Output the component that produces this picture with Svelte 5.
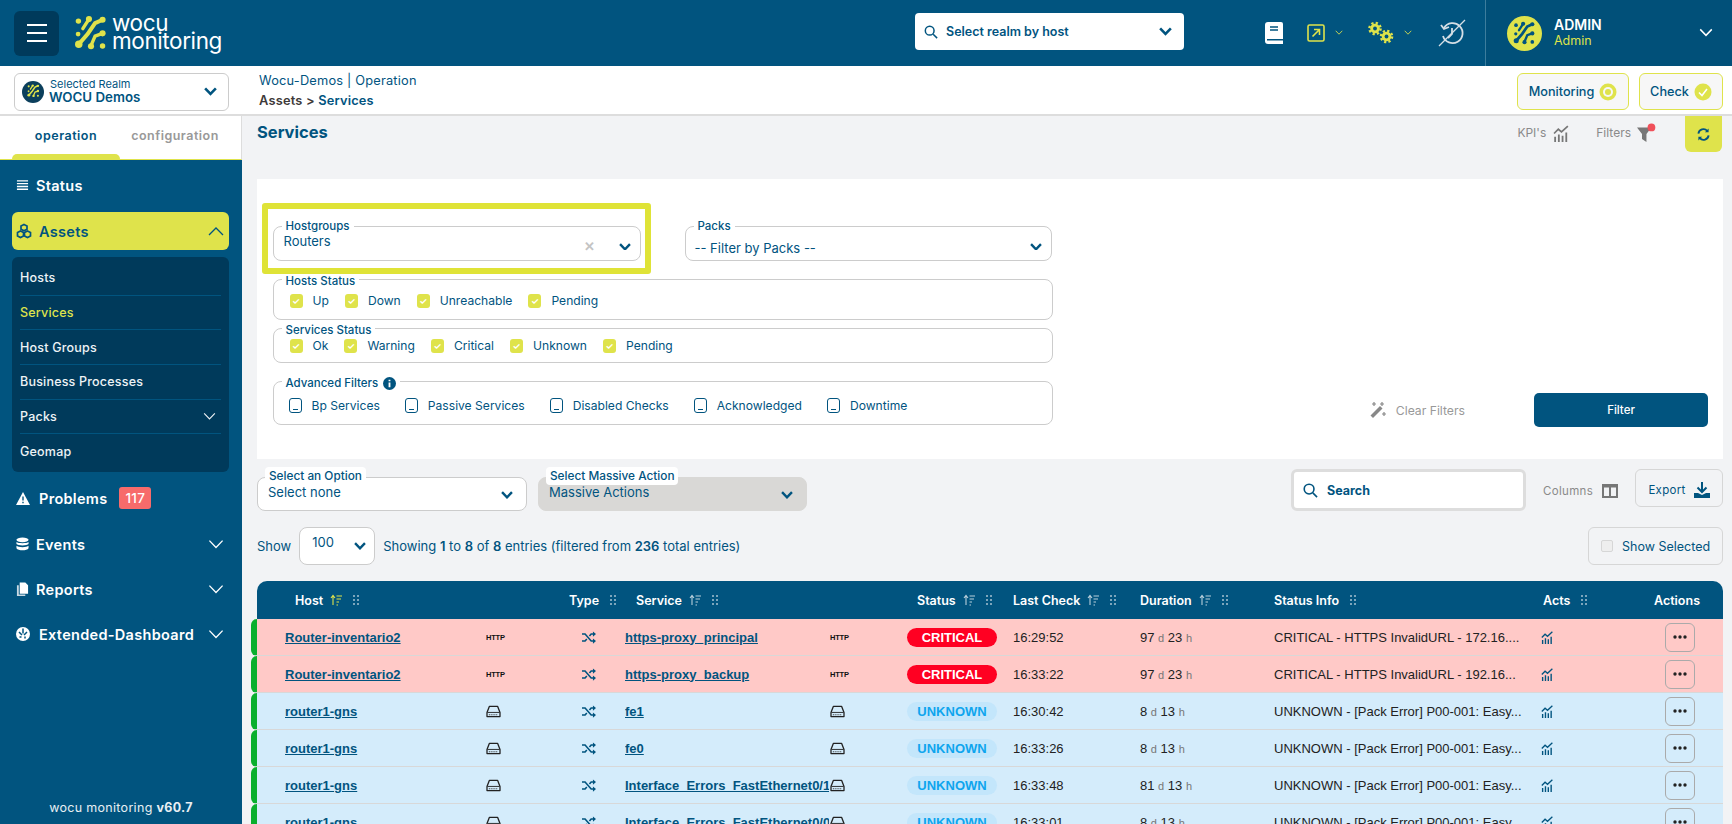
<script lang="ts">
  const hostsStatus = ['Up', 'Down', 'Unreachable', 'Pending']
  const servicesStatus = ['Ok', 'Warning', 'Critical', 'Unknown', 'Pending']
  const advanced = ['Bp Services', 'Passive Services', 'Disabled Checks', 'Acknowledged', 'Downtime']
  const subMenu = ['Hosts', 'Services', 'Host Groups', 'Business Processes', 'Packs', 'Geomap']

  const pack = 'UNKNOWN - [Pack Error] P00-001: Easy...'
  const rows = [
    { host: 'Router-inventario2', service: 'https-proxy_principal', icon: 'http', status: 'CRITICAL', last: '16:29:52', d: 97, h: 23, info: 'CRITICAL - HTTPS InvalidURL - 172.16....' },
    { host: 'Router-inventario2', service: 'https-proxy_backup', icon: 'http', status: 'CRITICAL', last: '16:33:22', d: 97, h: 23, info: 'CRITICAL - HTTPS InvalidURL - 192.16...' },
    { host: 'router1-gns', service: 'fe1', icon: 'router', status: 'UNKNOWN', last: '16:30:42', d: 8, h: 13, info: pack },
    { host: 'router1-gns', service: 'fe0', icon: 'router', status: 'UNKNOWN', last: '16:33:26', d: 8, h: 13, info: pack },
    { host: 'router1-gns', service: 'Interface_Errors_FastEthernet0/1', icon: 'router', status: 'UNKNOWN', last: '16:33:48', d: 81, h: 13, info: pack },
    { host: 'router1-gns', service: 'Interface_Errors_FastEthernet0/0', icon: 'router', status: 'UNKNOWN', last: '16:33:01', d: 8, h: 13, info: pack },
  ]
</script>

{#snippet chevron(size = 12, width = 2.4)}
  <svg class="chev" viewBox="0 0 12 8" width={size} height={size * 0.66}>
    <path d="M1 1.2 6 6.4 11 1.2" fill="none" stroke="currentColor" stroke-width={width} />
  </svg>
{/snippet}

{#snippet mark(color: string, w: number)}
  <svg viewBox="10 12 100 108" width={w} height={w * 1.08}>
    <g fill="none" stroke={color} stroke-linecap="round">
      <path d="M54 24 36 52" stroke-width="10" />
      <path d="M94 26 72 36 50 68 24 98" stroke-width="12" />
      <path d="M94 66 72 74 60 102" stroke-width="10" />
    </g>
    <g fill={color}>
      <circle cx="23" cy="30" r="8" />
      <circle cx="54" cy="24" r="9" />
      <circle cx="94" cy="26" r="9" />
      <circle cx="22" cy="68" r="7" />
      <circle cx="24" cy="98" r="11" />
      <circle cx="94" cy="66" r="9" />
      <circle cx="60" cy="104" r="9" />
      <circle cx="94" cy="103" r="8" />
    </g>
  </svg>
{/snippet}

{#snippet sortIcon(active = false)}
  <svg class="sort" class:active viewBox="0 0 12 12" width="12" height="12">
    <path d="M3 11V2M1 4l2-2.500L5 4" fill="none" stroke="currentColor" stroke-width="1.100" />
    <path d="M6.500 2H12M6.500 5H11M6.500 8H9M6.500 11H8" stroke="currentColor" stroke-width="1.200" />
  </svg>
{/snippet}

{#snippet dragIcon()}
  <svg class="drag" viewBox="0 0 8 12" width="8" height="12">
    <g fill="currentColor">
      <rect x="1" y="1" width="2" height="2" /><rect x="5" y="1" width="2" height="2" />
      <rect x="1" y="5" width="2" height="2" /><rect x="5" y="5" width="2" height="2" />
      <rect x="1" y="9" width="2" height="2" /><rect x="5" y="9" width="2" height="2" />
    </g>
  </svg>
{/snippet}

{#snippet kpiIcon(w: number, color: string)}
  <svg viewBox="0 0 16 16" width={w} height={w}>
    <path d="M1 8 5 4 8 6.500 14 1" fill="none" stroke={color} stroke-width="1.600" />
    <path d="M2 11v5M5.500 9v7M9 10v6M12.500 7v9" stroke={color} stroke-width="1.700" />
  </svg>
{/snippet}

{#snippet gear(cx: number, cy: number)}
  <circle cx={cx} cy={cy} r="4.800" fill="#dfe34b" />
  <circle cx={cx} cy={cy} r="5.600" fill="none" stroke="#dfe34b" stroke-width="2.400" stroke-dasharray="2.200 2.200" />
  <circle cx={cx} cy={cy} r="1.900" fill="#01547f" />
{/snippet}

{#snippet rowIcon(kind: string)}
  {#if kind === 'http'}
    <span class="http">HTTP</span>
  {:else}
    <svg viewBox="0 0 16 14" width="15" height="13">
      <path d="M3.500 1.500h9L15 8v4.500H1V8z" fill="none" stroke="#222" stroke-width="1.400" stroke-linejoin="round" />
      <path d="M1.500 8h13" stroke="#222" stroke-width="1" />
      <path d="M3 10.500h10" stroke="#222" stroke-width="1.300" stroke-dasharray="1 1" />
    </svg>
  {/if}
{/snippet}

<div class="page">
  <header class="topbar">
    <button class="burger" aria-label="menu">
      <span></span><span></span><span></span>
    </button>
    <div class="logo">
      {@render mark('#dfe34b', 34)}
      <div class="logo-text">wocu<br />monitoring</div>
    </div>

    <div class="realm-search">
      <svg viewBox="0 0 16 16" width="14" height="14">
        <circle cx="6.500" cy="6.500" r="5" fill="none" stroke="#01547f" stroke-width="1.700" />
        <path d="M10.500 10.500 15 15" stroke="#01547f" stroke-width="1.700" />
      </svg>
      <span>Select realm by host</span>
      {@render chevron(13)}
    </div>

    <div class="tools">
      <svg class="t-book" viewBox="0 0 18 22" width="18" height="22">
        <path d="M3 0h13a2 2 0 0 1 2 2v20H3a3 3 0 0 1-3-3V3a3 3 0 0 1 3-3z" fill="#fff" />
        <path d="M5 5h8M5 8h8" stroke="#01547f" stroke-width="1.500" />
        <path d="M2 17h16v1.500H2z" fill="#01547f" />
      </svg>
      <svg class="t-ext" viewBox="0 0 18 18" width="18" height="18">
        <rect x="1" y="1" width="16" height="16" rx="1.500" fill="none" stroke="#dfe34b" stroke-width="1.600" />
        <path d="M5.500 12.500 12 6M7 5.500h5.500V11" fill="none" stroke="#dfe34b" stroke-width="1.600" />
      </svg>
      <span class="t-down">{@render chevron(8, 1.300)}</span>
      <svg class="t-gears" viewBox="0 0 26 24" width="26" height="24">
        {@render gear(7, 7.500)}
        {@render gear(18.500, 15.500)}
      </svg>
      <span class="t-down2">{@render chevron(8, 1.300)}</span>
      <svg class="t-off" viewBox="0 0 28 28" width="28" height="28">
        <path d="M6 9a10 10 0 1 1-1 8" fill="none" stroke="#d5dfe6" stroke-width="1.800" />
        <path d="M3 6l3 4 5-2M14 9v6l-4 4" fill="none" stroke="#d5dfe6" stroke-width="1.800" />
        <path d="M1 27 27 1" stroke="#d5dfe6" stroke-width="1.300" />
      </svg>
    </div>

    <div class="user">
      <span class="avatar">{@render mark('#01547f', 23)}</span>
      <div class="user-text">
        <strong>ADMIN</strong>
        <small>Admin</small>
      </div>
      {@render chevron(14, 1.300)}
    </div>
  </header>

  <div class="subbar">
    <div class="realm-box">
      <span class="realm-dot">{@render mark('#dfe34b', 13)}</span>
      <div class="realm-text">
        <small>Selected Realm</small>
        <strong>WOCU Demos</strong>
      </div>
      {@render chevron(13)}
    </div>
    <div class="crumbs">
      <div>Wocu-Demos | Operation</div>
      <div class="crumb-2"><b>Assets &gt;</b> <span>Services</span></div>
    </div>
    <div class="modes">
      <button class="mode mode-mon">
        Monitoring
        <svg viewBox="0 0 18 18" width="18" height="18">
          <circle cx="9" cy="9" r="8.500" fill="#dfe34b" />
          <circle cx="9" cy="9" r="5" fill="#f7f7f7" />
          <circle cx="9" cy="9" r="3" fill="#dfe34b" />
        </svg>
      </button>
      <button class="mode">
        Check
        <svg viewBox="0 0 18 18" width="18" height="18">
          <circle cx="9" cy="9" r="8.500" fill="#dfe34b" />
          <path d="M5 9.500 8 12.500 13 6" fill="none" stroke="#fff" stroke-width="1.600" />
        </svg>
      </button>
    </div>
  </div>

  <div class="body">
    <aside class="side">
      <div class="tabs">
        <div class="tab on">operation</div>
        <div class="tab">configuration</div>
      </div>
      <nav class="menu">
        <div class="item">
          <svg viewBox="0 0 14 14" width="13" height="13">
            <path d="M1 2h12M1 5h12M1 8h12M1 11h12" stroke="#fff" stroke-width="1.500" />
          </svg>
          <span>Status</span>
        </div>
        <div class="item current">
          <svg viewBox="0 0 16 16" width="16" height="16">
            <g fill="none" stroke="#01547f" stroke-width="1.700">
              <path d="M8 1.500 11 3v3.200L8 7.800 5 6.200V3z" />
              <path d="M4.500 8 7.500 9.500v3.500l-3 1.500-3-1.500V9.500z" />
              <path d="M11.500 8l3 1.500v3.500l-3 1.500-3-1.500V9.500z" />
            </g>
          </svg>
          <span>Assets</span>
          <svg class="end" viewBox="0 0 16 9" width="16" height="9">
            <path d="M1 8 8 1l7 7" fill="none" stroke="#01547f" stroke-width="1.300" />
          </svg>
        </div>
        <div class="sub">
          {#each subMenu as name}
            <div class="sub-row" class:sel={name === 'Services'}>
              {name}
              {#if name === 'Packs'}
                {@render chevron(13, 1)}
              {/if}
            </div>
          {/each}
        </div>
        <div class="item problems">
          <svg viewBox="0 0 14 13" width="14" height="13">
            <path d="M7 0 14 13H0z" fill="#fff" />
            <path d="M7 4.500v4M7 9.800v1.500" stroke="#01547f" stroke-width="1.400" />
          </svg>
          <span class="gap-wide">Problems</span>
          <em class="badge">117</em>
        </div>
        <div class="item">
          <svg viewBox="0 0 14 14" width="13" height="14">
            <ellipse cx="7" cy="2.500" rx="6.500" ry="2.500" fill="#fff" />
            <path d="M.5 4.800C2 6.500 12 6.500 13.500 4.800V7C12 9 2 9 .5 7zM.5 9C2 11 12 11 13.500 9v2.500C12 14.500 2 14.500.5 11.500z" fill="#fff" />
          </svg>
          <span>Events</span>
          <span class="end">{@render chevron(16, 1)}</span>
        </div>
        <div class="item">
          <svg viewBox="0 0 14 15" width="13" height="15">
            <path d="M4 0h6l3 3v9H4z" fill="#fff" />
            <path d="M1 3h2v10h7v1.500H1z" fill="#c9d9e3" />
          </svg>
          <span>Reports</span>
          <span class="end">{@render chevron(16, 1)}</span>
        </div>
        <div class="item">
          <svg viewBox="0 0 14 14" width="14" height="14">
            <circle cx="7" cy="7" r="7" fill="#fff" />
            <path d="M7 1.500v5M3 5l3 3M11 5 8 8M3.500 10h2M9 9.500v2" stroke="#01547f" stroke-width="1.500" />
          </svg>
          <span class="gap-wide">Extended-Dashboard</span>
          <span class="end">{@render chevron(16, 1)}</span>
        </div>
      </nav>
      <div class="version">wocu monitoring <b>v60.7</b></div>
    </aside>

    <main class="content">
      <div class="title-row">
        <h1>Services</h1>
        <div class="title-tools">
          <span class="muted">KPI's</span>
          {@render kpiIcon(17, '#777')}
          <span class="muted filters">Filters</span>
          <svg class="funnel" viewBox="0 0 18 18" width="20" height="20">
            <path d="M0 4h13L8.500 10v7l-4-2.500V10z" fill="#777" />
            <circle cx="13" cy="4" r="3.500" fill="#f0505a" />
          </svg>
          <button class="refresh" aria-label="refresh">
            <svg viewBox="0 0 14 14" width="13" height="13">
              <path d="M1.500 6A5.500 5.500 0 0 1 11 3M12.500 8A5.500 5.500 0 0 1 3 11" fill="none" stroke="#01547f" stroke-width="2" />
              <path d="M12.500 .5v4h-4zM1.500 13.500v-4h4z" fill="#01547f" />
            </svg>
          </button>
        </div>
      </div>

      <section class="filters-panel">
        <div class="filters-left">
          <div class="first-line">
            <div class="spot">
              <fieldset class="box pick">
                <legend>Hostgroups</legend>
                <span class="pick-value raised">Routers</span>
                <span class="clear">✕</span>
                {@render chevron(12)}
              </fieldset>
            </div>
            <fieldset class="box pick packs">
              <legend>Packs</legend>
              <span class="pick-value lowered">-- Filter by Packs --</span>
              {@render chevron(12)}
            </fieldset>
          </div>

          <fieldset class="box hosts">
            <legend>Hosts Status</legend>
            <div class="checks">
              {#each hostsStatus as label}
                <label class="check"><i class="tick">✓</i>{label}</label>
              {/each}
            </div>
          </fieldset>

          <fieldset class="box services">
            <legend>Services Status</legend>
            <div class="checks">
              {#each servicesStatus as label}
                <label class="check"><i class="tick">✓</i>{label}</label>
              {/each}
            </div>
          </fieldset>

          <fieldset class="box adv">
            <legend>
              Advanced Filters
              <svg viewBox="0 0 14 14" width="13" height="13">
                <circle cx="7" cy="7" r="7" fill="#01547f" />
                <path d="M7 6v5M7 3v1.600" stroke="#fff" stroke-width="2" />
              </svg>
            </legend>
            <div class="checks wide">
              {#each advanced as label}
                <label class="check"><i class="dash"></i>{label}</label>
              {/each}
            </div>
          </fieldset>
        </div>

        <div class="filters-right">
          <span class="clear-filters">
            <svg viewBox="0 0 18 18" width="18" height="18">
              <path d="M1.500 14.500 11 5l2.500 2.500L4 17z" fill="#888" />
              <path d="M11 3h4M13 1v4M3 3h4M5 1v4M13 13h4M15 11v4" stroke="#888" stroke-width="1.200" />
            </svg>
            Clear Filters
          </span>
          <button class="apply">Filter</button>
        </div>
      </section>

      <div class="bulk-row">
        <div class="drop">
          <span class="drop-tag">Select an Option</span>
          <span class="drop-value">Select none</span>
          {@render chevron(12)}
        </div>
        <div class="drop off">
          <span class="drop-tag">Select Massive Action</span>
          <span class="drop-value">Massive Actions</span>
          {@render chevron(12)}
        </div>
        <div class="search">
          <svg viewBox="0 0 16 16" width="15" height="15">
            <circle cx="6.500" cy="6.500" r="5.200" fill="none" stroke="#01547f" stroke-width="1.700" />
            <path d="M10.500 10.500 15 15" stroke="#01547f" stroke-width="1.700" />
          </svg>
          <span>Search</span>
        </div>
        <span class="columns">
          Columns
          <svg viewBox="0 0 16 14" width="16" height="14">
            <rect x="1" y="1" width="14" height="12" fill="none" stroke="#777" stroke-width="2" />
            <path d="M8 1v12M1 2.500h14" stroke="#777" stroke-width="2" />
          </svg>
        </span>
        <button class="export">
          Export
          <svg viewBox="0 0 16 16" width="16" height="16">
            <path d="M8 0v9M3.500 5.500 8 10l4.500-4.500" fill="none" stroke="#01547f" stroke-width="2" />
            <path d="M0 11h4l4 2 4-2h4v5H0z" fill="#01547f" />
          </svg>
        </button>
      </div>

      <div class="show-row">
        <span>Show</span>
        <div class="page-size">
          <span>100</span>
          {@render chevron(12)}
        </div>
        <span class="showing">Showing <b>1</b> to <b>8</b> of <b>8</b> entries (filtered from <b>236</b> total entries)</span>
        <button class="show-selected"><i></i>Show Selected</button>
      </div>

      <div class="table">
        <div class="head">
          <div class="th th-host">Host {@render sortIcon(true)}{@render dragIcon()}</div>
          <div class="th">Type {@render dragIcon()}</div>
          <div class="th th-service">Service {@render sortIcon()}{@render dragIcon()}</div>
          <div class="th th-status">Status {@render sortIcon()}{@render dragIcon()}</div>
          <div class="th">Last Check {@render sortIcon()}{@render dragIcon()}</div>
          <div class="th">Duration {@render sortIcon()}{@render dragIcon()}</div>
          <div class="th">Status Info {@render dragIcon()}</div>
          <div class="th th-acts">Acts {@render dragIcon()}</div>
          <div class="th th-actions">Actions</div>
        </div>
        {#each rows as row}
          <div class="row" class:critical={row.status === 'CRITICAL'}>
            <a class="cell-host" href="#host">{row.host}</a>
            <div class="cell-icon">{@render rowIcon(row.icon)}</div>
            <div class="cell-type">
              <svg viewBox="0 0 16 14" width="14" height="13">
                <path d="M0 3h3.500l7 8H13M0 11h3.500l2-2.400M8.500 5.400 10.500 3H13" fill="none" stroke="#01547f" stroke-width="1.800" />
                <path d="M12.500 0 16 3l-3.500 3zM12.500 8 16 11l-3.500 3z" fill="#01547f" />
              </svg>
            </div>
            <div class="cell-service"><a href="#service">{row.service}</a></div>
            <div class="cell-icon svc">{@render rowIcon(row.icon)}</div>
            <div><span class="pill">{row.status}</span></div>
            <div class="plain">{row.last}</div>
            <div class="plain">{row.d} <small>d</small> {row.h} <small>h</small></div>
            <div class="plain">{row.info}</div>
            <div class="cell-acts">{@render kpiIcon(13, '#01547f')}</div>
            <div class="cell-actions">
              <button class="dots" aria-label="actions">
                <svg viewBox="0 0 14 4" width="14" height="4">
                  <circle cx="2" cy="2" r="1.700" fill="#222" />
                  <circle cx="7" cy="2" r="1.700" fill="#222" />
                  <circle cx="12" cy="2" r="1.700" fill="#222" />
                </svg>
              </button>
            </div>
          </div>
        {/each}
      </div>
    </main>
  </div>
</div>

<style>
  :global(body) {
    margin: 0;
    overflow: hidden;
    font-family: Inter, 'Liberation Sans', sans-serif;
    color: #01547f;
  }

  button {
    font-family: inherit;
    cursor: pointer;
  }

  .page {
    width: 1732px;
    height: 824px;
    overflow: hidden;
    display: flex;
    flex-direction: column;
    background: #f2f3f5;
  }

  .chev {
    display: block;
    flex-shrink: 0;
  }

  /* top bar */
  .topbar {
    height: 66px;
    flex-shrink: 0;
    display: flex;
    align-items: center;
    background: #01547f;
  }

  .burger {
    width: 45px;
    height: 45px;
    margin-left: 14px;
    border: 0;
    border-radius: 6px;
    background: #003a5b;
    display: flex;
    flex-direction: column;
    align-items: center;
    justify-content: center;
    gap: 6px;
  }

  .burger span {
    width: 20px;
    height: 2px;
    background: #fff;
  }

  .logo {
    display: flex;
    align-items: center;
    gap: 4px;
    margin-left: 15px;
    width: 148px;
  }

  .logo-text {
    color: #fff;
    font-size: 22.500px;
    line-height: 18px;
    letter-spacing: -0.4px;
    margin-top: -3px;
  }

  .realm-search {
    width: 269px;
    height: 37px;
    margin-left: 693px;
    margin-top: -3px;
    padding: 0 12px 0 9px;
    box-sizing: border-box;
    background: #fff;
    border-radius: 4px;
    display: flex;
    align-items: center;
    gap: 8px;
    font-size: 12.500px;
    font-weight: 600;
  }

  .realm-search span {
    flex: 1;
  }

  .tools {
    display: flex;
    align-items: center;
    width: 301px;
    color: #dfe34b;
  }

  .t-book {
    margin-left: 81px;
  }

  .t-ext {
    margin-left: 24px;
  }

  .t-down {
    margin-left: 10px;
  }

  .t-gears {
    margin-left: 25px;
  }

  .t-down2 {
    margin-left: 10px;
  }

  .t-off {
    margin-left: 26px;
  }

  .user {
    align-self: stretch;
    flex: 1;
    display: flex;
    align-items: center;
    border-left: 1px solid #3d7d9d;
    padding: 0 19px 0 21px;
    color: #fff;
    background: #015079;
  }

  .avatar {
    width: 35px;
    height: 35px;
    border-radius: 50%;
    background: #dfe34b;
    display: flex;
    align-items: center;
    justify-content: center;
  }

  .user-text {
    flex: 1;
    margin-left: 12px;
    margin-top: -3px;
    display: flex;
    flex-direction: column;
  }

  .user-text strong {
    font-size: 14px;
    font-weight: 600;
    line-height: 17px;
  }

  .user-text small {
    font-size: 12.500px;
    line-height: 15px;
    color: #dfe34b;
  }

  /* second bar */
  .subbar {
    height: 50px;
    flex-shrink: 0;
    box-sizing: border-box;
    display: flex;
    align-items: center;
    background: #fff;
    border-bottom: 2px solid #ddd;
    padding-right: 9px;
  }

  .realm-box {
    width: 215px;
    height: 38px;
    margin: 3px 0 0 14px;
    box-sizing: border-box;
    border: 1px solid #ccc;
    border-radius: 6px;
    padding: 0 11px 0 7px;
    display: flex;
    align-items: center;
    flex-shrink: 0;
  }

  .realm-dot {
    width: 22px;
    height: 22px;
    border-radius: 50%;
    background: #0b3f5c;
    display: flex;
    align-items: center;
    justify-content: center;
  }

  .realm-text {
    flex: 1;
    margin-left: 5px;
    display: flex;
    flex-direction: column;
  }

  .realm-text small {
    font-size: 11px;
    line-height: 11px;
    margin-left: 1px;
  }

  .realm-text strong {
    font-size: 13.300px;
    font-weight: 600;
    line-height: 14px;
  }

  .crumbs {
    flex: 1;
    margin: 2px 0 0 30px;
    font-size: 12.800px;
    line-height: 20px;
    letter-spacing: 0.2px;
  }

  .crumb-2 {
    font-weight: 600;
  }

  .crumb-2 b {
    color: #3e3a39;
    font-weight: 600;
  }

  .modes {
    display: flex;
    gap: 10px;
    margin-top: 3px;
  }

  .mode {
    height: 37px;
    width: 84px;
    border: 1px solid #dfe34b;
    border-radius: 6px;
    background: #f7f7f7;
    color: #01547f;
    font-size: 12.700px;
    font-weight: 500;
    display: flex;
    align-items: center;
    justify-content: center;
    gap: 5px;
    padding: 0;
  }

  .mode-mon {
    width: 112px;
  }

  .body {
    flex: 1;
    display: flex;
    min-height: 0;
  }

  /* sidebar */
  .side {
    width: 242px;
    flex-shrink: 0;
    display: flex;
    flex-direction: column;
    background: #01547f;
  }

  .tabs {
    height: 44px;
    flex-shrink: 0;
    display: flex;
    background: #fff;
    border-right: 1px solid #ddd;
    border-bottom: 1px solid #dfe34b;
    box-sizing: border-box;
  }

  .tab {
    padding-top: 12px;
    text-align: center;
    font-size: 12.500px;
    font-weight: 600;
    letter-spacing: 0.5px;
    color: #999;
    box-sizing: border-box;
  }

  .tab.on {
    margin-left: 12px;
    width: 108px;
    color: #01547f;
    display: flex;
    flex-direction: column;
    justify-content: space-between;
  }

  .tab.on::after {
    content: '';
    height: 5px;
    background: #dfe34b;
    border-radius: 5px 5px 0 0;
  }

  .tab:not(.on) {
    width: 120px;
    margin-left: -5px;
  }

  .menu {
    padding: 6px 13px 0 12px;
    display: flex;
    flex-direction: column;
    gap: 7px;
  }

  .item {
    height: 38px;
    display: flex;
    align-items: center;
    gap: 7px;
    padding: 0 4px;
    color: #fff;
    font-size: 14.500px;
    font-weight: 600;
    letter-spacing: 0.3px;
    border-radius: 6px;
  }

  .item.current {
    background: #dfe34b;
    color: #01547f;
    margin-top: 1px;
  }

  .item .end {
    margin-left: auto;
    margin-right: 1px;
  }

  .problems {
    margin-bottom: 1px;
  }

  .gap-wide {
    margin-left: 2px;
  }

  .badge {
    font-style: normal;
    font-weight: 500;
    font-size: 13.500px;
    color: #fff;
    background: #f76b6b;
    border-radius: 3px;
    padding: 3px 6px;
    margin-left: 5px;
  }

  .sub {
    background: #003a5b;
    border-radius: 6px;
    padding: 4px 8px 0;
    height: 215px;
    box-sizing: border-box;
  }

  .sub-row {
    height: 34.700px;
    box-sizing: border-box;
    display: flex;
    align-items: center;
    justify-content: space-between;
    padding-right: 5px;
    color: #eef3f6;
    font-size: 12.500px;
    font-weight: 500;
    letter-spacing: 0.2px;
    border-bottom: 1px solid #01547f;
  }

  .sub-row:last-child {
    border-bottom: 0;
  }

  .sub-row.sel {
    color: #dfe34b;
  }

  .version {
    margin-top: auto;
    padding-bottom: 9px;
    text-align: center;
    color: #e8eff3;
    font-size: 12.500px;
    letter-spacing: 0.3px;
  }

  .version b {
    font-weight: 700;
  }

  /* main column */
  .content {
    flex: 1;
    min-width: 0;
    padding: 0 9px 0 15px;
    overflow: hidden;
  }

  .title-row {
    height: 63px;
    display: flex;
    justify-content: space-between;
    align-items: flex-start;
  }

  h1 {
    margin: 5px 0 0;
    font-size: 16.500px;
    font-weight: 700;
    line-height: 22px;
  }

  .title-tools {
    display: flex;
    align-items: center;
    height: 36px;
  }

  .muted {
    font-size: 12px;
    color: #8a8a8a;
    margin-top: -4px;
  }

  .title-tools svg {
    margin-left: 7px;
    margin-top: -2px;
  }

  .filters {
    margin-left: 26px;
  }

  .title-tools .funnel {
    margin-left: 6px;
    margin-top: -3px;
  }

  .refresh {
    width: 37px;
    height: 36px;
    margin-left: 28px;
    margin-right: 1px;
    border: 0;
    border-radius: 0 0 6px 6px;
    background: #dfe34b;
    display: flex;
    align-items: center;
    justify-content: center;
    padding: 0;
  }

  .title-tools .refresh svg {
    margin: 0;
  }

  .filters-panel {
    height: 280px;
    box-sizing: border-box;
    background: #fff;
    display: flex;
    padding: 24px 15px 32px 15.500px;
  }

  .filters-left {
    width: 780px;
    flex-shrink: 0;
  }

  .first-line {
    display: flex;
    align-items: flex-start;
  }

  .spot {
    width: 389px;
    height: 71px;
    box-sizing: border-box;
    margin-left: -11px;
    border: 6px solid #dfe337;
    border-radius: 3px;
    padding: 11px 4px 0 5px;
    flex-shrink: 0;
  }

  fieldset.box {
    margin: 0;
    padding: 0 9px;
    border: 1px solid #ccc;
    border-radius: 8px;
    box-sizing: border-box;
    min-width: 0;
  }

  legend {
    padding: 0 4px;
    margin-left: -1px;
    font-size: 11.500px;
    line-height: 13px;
    font-weight: 500;
    display: flex;
    align-items: center;
    gap: 5px;
  }

  .hosts legend,
  .services legend,
  .adv legend {
    position: relative;
    top: 2px;
  }

  .pick {
    height: 41px;
    display: flex;
    align-items: center;
    font-size: 13px;
    padding-right: 13px;
    position: relative;
  }

  .pick-value {
    flex: 1;
  }

  .pick-value.raised {
    margin-top: -11px;
    margin-left: 1px;
  }

  .pick-value.lowered {
    position: relative;
    top: 1px;
  }

  .clear {
    color: #c4c4c4;
    font-size: 13px;
    font-weight: 700;
    margin-right: 24px;
    margin-top: -1px;
  }

  .packs {
    width: 367px;
    margin: 17px 0 0 34px !important;
  }

  .hosts {
    height: 47px;
    margin-top: -1px !important;
  }

  .services {
    height: 41px;
    margin-top: 2px !important;
  }

  .adv {
    height: 50px;
    margin-top: 12px !important;
  }

  .checks {
    display: flex;
    gap: 16px;
    padding-top: 7px;
    padding-left: 7px;
  }

  .services .checks {
    padding-top: 3px;
  }

  .checks.wide {
    gap: 25px;
    padding-top: 10px;
    padding-left: 6px;
  }

  .check {
    display: flex;
    align-items: center;
    gap: 10px;
    font-size: 12.100px;
  }

  .tick {
    width: 13px;
    height: 14px;
    border-radius: 3px;
    background: #dfe34b;
    color: #fff;
    font-size: 9px;
    font-style: normal;
    font-weight: 700;
    line-height: 14px;
    text-align: center;
  }

  .dash {
    width: 11px;
    height: 13px;
    border: 1px solid #01547f;
    border-radius: 3px;
    position: relative;
  }

  .dash::after {
    content: '';
    position: absolute;
    left: 3px;
    right: 3px;
    bottom: 2px;
    height: 1px;
    background: #01547f;
  }

  .filters-right {
    flex: 1;
    align-self: flex-end;
    display: flex;
    align-items: center;
    justify-content: flex-end;
    gap: 69px;
  }

  .clear-filters {
    display: flex;
    align-items: center;
    gap: 9px;
    font-size: 12.200px;
    color: #999;
  }

  .apply {
    width: 174px;
    height: 34px;
    border: 0;
    border-radius: 5px;
    background: #01547f;
    color: #fff;
    font-size: 11.500px;
    font-weight: 500;
  }

  .bulk-row {
    height: 42px;
    margin-top: 10px;
    display: flex;
    align-items: flex-start;
  }

  .drop {
    position: relative;
    width: 270px;
    height: 34px;
    margin-top: 8px;
    margin-right: 11px;
    box-sizing: border-box;
    background: #fff;
    border: 1px solid #ccc;
    border-radius: 8px;
    padding: 0 13px 0 10px;
    display: flex;
    align-items: center;
    flex-shrink: 0;
    font-size: 13px;
  }

  .drop.off {
    background: #d9d8d6;
    border-color: #d9d8d6;
    width: 269px;
  }

  .drop-tag {
    position: absolute;
    left: 7px;
    top: -11px;
    padding: 3px 4px;
    background: #fff;
    border-radius: 4px;
    font-size: 11.800px;
    line-height: 12px;
    font-weight: 500;
  }

  .drop-value {
    flex: 1;
    margin-top: -5px;
  }

  .drop .chev {
    margin-top: 2px;
  }

  .search {
    width: 235px;
    height: 42px;
    margin-left: auto;
    box-sizing: border-box;
    background: #fff;
    border: 3px solid #ddd;
    border-radius: 6px;
    display: flex;
    align-items: center;
    gap: 9px;
    padding-left: 9px;
    font-size: 12.500px;
    font-weight: 700;
  }

  .columns {
    display: flex;
    align-items: center;
    gap: 9px;
    margin: 15px 0 0 17px;
    font-size: 11.500px;
    letter-spacing: 0.3px;
    color: #8a8a8a;
  }

  .export {
    width: 88px;
    height: 38px;
    margin-left: 17px;
    border: 1px solid #d6d6d6;
    border-radius: 6px;
    background: transparent;
    color: #01547f;
    font-size: 11.500px;
    letter-spacing: 0.3px;
    display: flex;
    align-items: center;
    justify-content: center;
    gap: 8px;
    padding: 3px 0 0;
  }

  .show-row {
    height: 38px;
    margin-top: 16px;
    display: flex;
    align-items: center;
    font-size: 13px;
  }

  .page-size {
    width: 76px;
    height: 38px;
    margin: 0 8px 0 8px;
    box-sizing: border-box;
    background: #fff;
    border: 1px solid #ccc;
    border-radius: 8px;
    padding: 0 8px 8px 12px;
    display: flex;
    align-items: center;
    justify-content: space-between;
  }

  .page-size .chev {
    margin-top: 8px;
  }

  .showing b {
    font-weight: 600;
  }

  .show-selected {
    width: 135px;
    height: 38px;
    margin-left: auto;
    border: 1px solid #d6d6d6;
    border-radius: 6px;
    background: transparent;
    color: #01547f;
    font-size: 12.500px;
    display: flex;
    align-items: center;
    gap: 9px;
    padding: 0 0 0 12px;
  }

  .show-selected i {
    width: 10px;
    height: 10px;
    border: 1px solid #d6d6d6;
    border-radius: 2px;
    background: #eee;
  }

  /* table */
  .table {
    margin-top: 16px;
    --cols: 228px 84px 56px 205px 77px 106px 127px 134px 261px 115px 73px;
  }

  .head {
    height: 38px;
    display: grid;
    grid-template-columns: var(--cols);
    align-items: center;
    background: #01547f;
    border-radius: 10px 10px 0 0;
    color: #fff;
  }

  .th {
    display: flex;
    align-items: center;
    font-size: 12.500px;
    font-weight: 600;
    white-space: nowrap;
  }

  .th .sort {
    margin-left: 7px;
    color: #b9cfdb;
  }

  .th .sort.active {
    color: #dfe34b;
  }

  .th .drag {
    margin-left: 10px;
    color: #7da6bc;
  }

  .th-host {
    grid-column: span 2;
    padding-left: 38px;
  }

  .th-service {
    grid-column: span 2;
    padding-left: 11px;
  }

  .th-status {
    padding-left: 10px;
  }

  .th-acts {
    padding-left: 8px;
  }

  .th-actions {
    padding-left: 4px;
  }

  .row {
    height: 37px;
    box-sizing: border-box;
    margin-left: -6px;
    border-left: 6px solid #0aaf2d;
    border-bottom: 1px solid #d8d8d8;
    border-radius: 6px 0 0 6px;
    display: grid;
    grid-template-columns: var(--cols);
    align-items: center;
    background: #d4ecfb;
    font-family: 'Liberation Sans', Arial, sans-serif;
    font-size: 13px;
    color: #222;
  }

  .row.critical {
    background: #ffc9c7;
  }

  a {
    color: #01547f;
    font-weight: 700;
    text-decoration: underline;
    white-space: nowrap;
  }

  .cell-host {
    padding-left: 28px;
  }

  .cell-icon {
    padding-left: 1px;
    display: flex;
    align-items: center;
  }

  .cell-icon.svc {
    padding-left: 0;
    margin-left: 0;
  }

  .http {
    font-size: 7.500px;
    font-weight: 700;
    color: #111;
    letter-spacing: -0.2px;
  }

  .cell-type {
    padding-left: 13px;
    display: flex;
  }

  .cell-service {
    overflow: hidden;
    white-space: nowrap;
    margin-right: 1px;
  }

  .pill {
    display: block;
    width: 90px;
    height: 19px;
    border-radius: 10px;
    background: #c3e6fb;
    color: #0ea5ee;
    font-weight: 700;
    text-align: center;
    line-height: 20px;
  }

  .critical .pill {
    background: #ff0022;
    color: #fff;
  }

  .plain small {
    font-size: 11px;
    color: #777;
  }

  .cell-acts {
    padding-left: 6px;
    display: flex;
  }

  .cell-actions {
    padding-left: 15px;
  }

  .dots {
    width: 30px;
    height: 29px;
    display: flex;
    align-items: center;
    justify-content: center;
    border: 1px solid #aaa;
    border-radius: 6px;
    background: transparent;
    padding: 0;
  }
</style>
